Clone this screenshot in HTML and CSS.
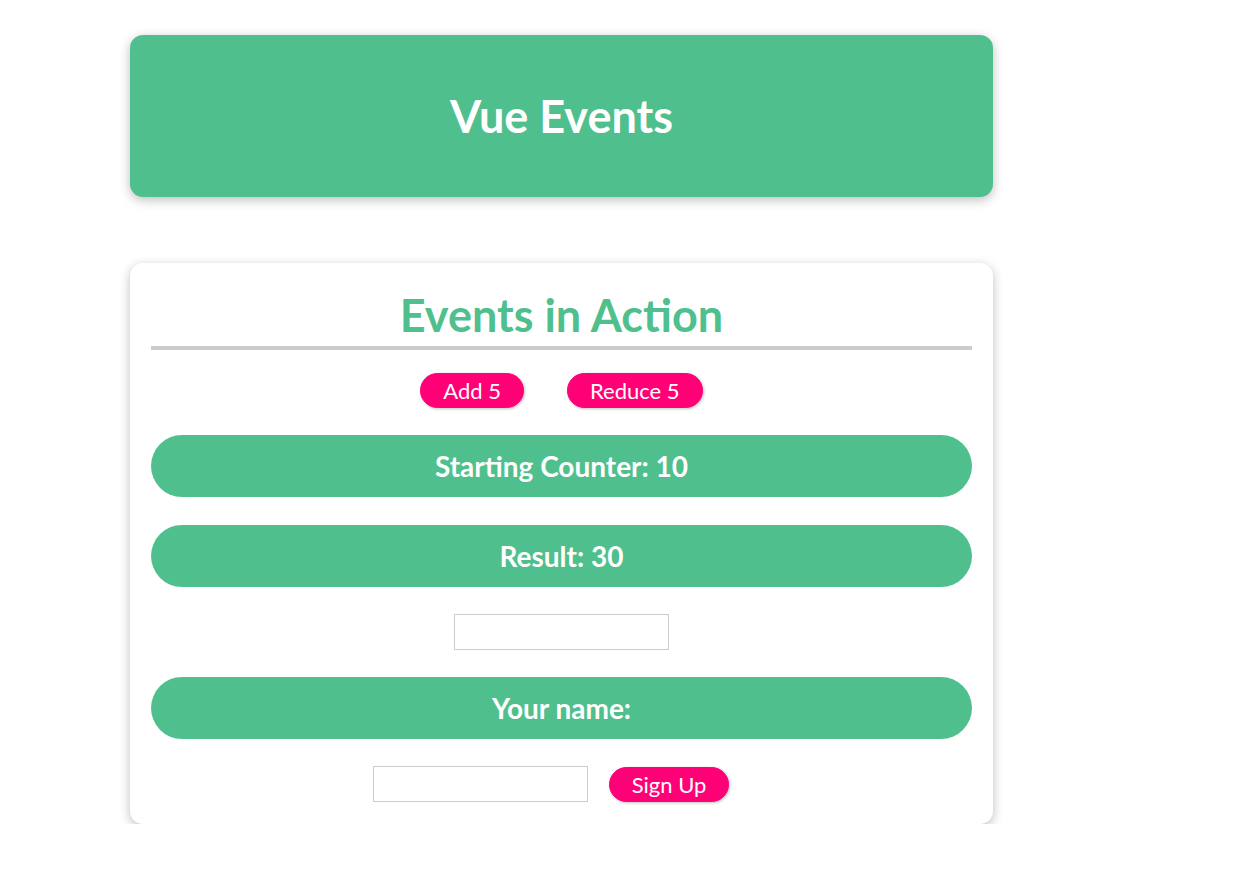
FILE: index.html
```html
<!DOCTYPE html>
<html lang="en">
<head>
<meta charset="utf-8">
<title>Vue Events</title>
<link rel="stylesheet" href="styles.css">
</head>
<body>
  <header class="header">
    <h1 class="header-title">Vue Events</h1>
  </header>
  <section class="events">
    <h2 class="events-title">Events in Action</h2>
    <div class="btn-row">
      <button class="btn">Add 5</button>
      <button class="btn">Reduce 5</button>
    </div>
    <p class="bar">Starting Counter: 10</p>
    <p class="bar bar-next">Result: 30</p>
    <div class="field-row">
      <input class="field" type="text">
    </div>
    <p class="bar">Your name:</p>
    <form class="signup-row">
      <input class="field" type="text">
      <button class="btn btn-signup" type="button">Sign Up</button>
    </form>
  </section>
</body>
</html>
```

FILE: styles.css
```css
* {
  box-sizing: border-box;
}

html {
  font-family: Lato, "Open Sans", sans-serif;
}

body {
  margin: 0;
  background: #ffffff;
}

.header {
  width: 863px;
  height: 162px;
  margin: 35px 0 0 130px;
  border-radius: 13px;
  background-color: #4fc08d;
  color: #ffffff;
  box-shadow: 0 3px 11px rgba(0, 0, 0, 0.26);
  display: flex;
  align-items: center;
  justify-content: center;
}

.header-title {
  margin: 0;
  font-size: 45px;
  font-weight: 700;
  line-height: 1;
}

.events {
  width: 863px;
  margin: 66px 0 0 130px;
  padding: 21px 21px 22px;
  border-radius: 13px;
  background: #ffffff;
  box-shadow: 0 3px 11px rgba(0, 0, 0, 0.26);
  display: flex;
  flex-direction: column;
  align-items: stretch;
  gap: 27px;
  text-align: center;
}

.events-title {
  margin: 0 0 -4px;
  height: 66px;
  font-size: 45px;
  font-weight: 700;
  line-height: 62px;
  color: #4fc08d;
  border-bottom: 4px solid #cccccc;
}

.btn-row {
  display: flex;
  justify-content: center;
  gap: 43px;
}

.btn {
  font: inherit;
  font-size: 22px;
  height: 35px;
  padding: 0 22px;
  border: 1px solid #ff0077;
  border-radius: 20px;
  background-color: #ff0077;
  color: #ffffff;
  box-shadow: 1px 1px 3px rgba(0, 0, 0, 0.26);
  cursor: pointer;
}

.bar {
  margin: 0;
  height: 62px;
  border-radius: 31px;
  background-color: #4fc08d;
  color: #ffffff;
  font-size: 28px;
  font-weight: 700;
  line-height: 62px;
}

.bar-next {
  margin-top: 1px;
}

.field-row {
  display: flex;
  justify-content: center;
}

.field {
  font: inherit;
  width: 215px;
  height: 36px;
  border: 1px solid #cccccc;
  background: #ffffff;
}

.signup-row {
  margin: 0;
  display: flex;
  justify-content: center;
  align-items: center;
  gap: 21px;
}

.btn-signup {
  margin: 1px 21px 0 0;
}
```
